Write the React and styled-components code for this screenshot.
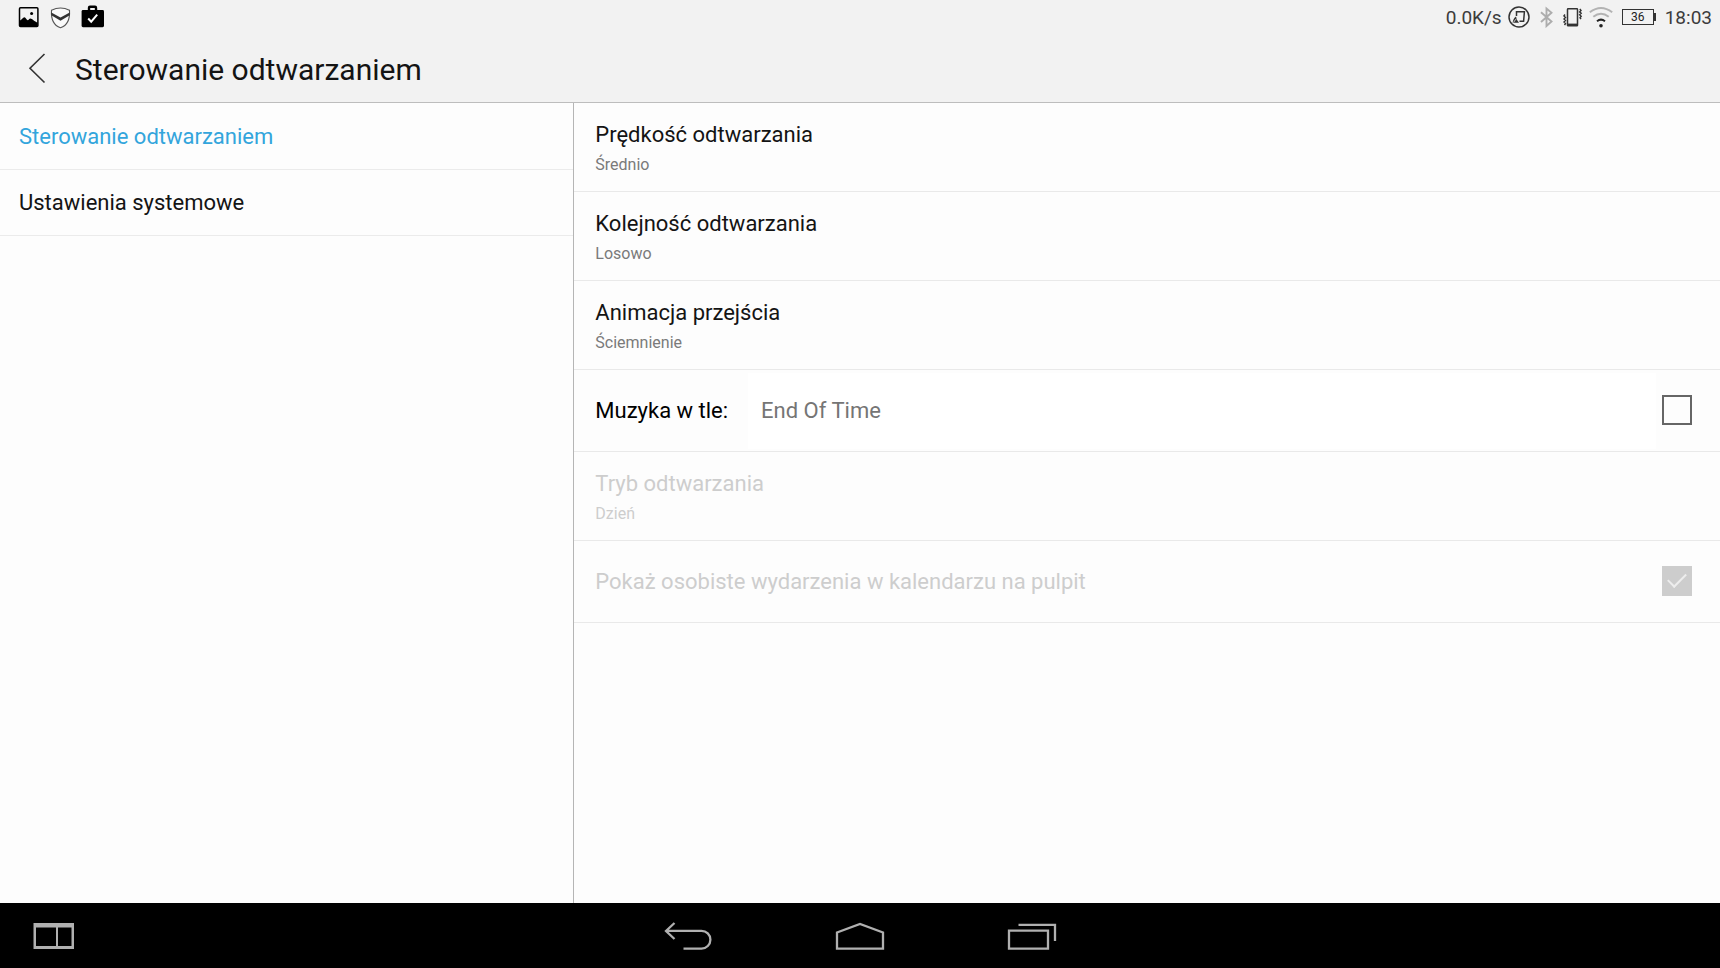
import React from 'react';
import styled, { createGlobalStyle } from 'styled-components';

const GlobalStyle = createGlobalStyle`
  * {
    box-sizing: border-box;
  }
  body {
    margin: 0;
    font-family: Roboto, "Noto Sans", sans-serif;
    background-color: #fdfdfd;
    color: #141414;
  }
  button, input {
    font-family: inherit;
  }
`

const Screen = styled.div`
  display: flex;
  flex-direction: column;
  min-height: 100vh;
`

const Header = styled.header`
  background-color: #f2f2f2;
  border-bottom: 1px solid #bdbdbd;
`

const StatusBar = styled.div`
  display: flex;
  justify-content: space-between;
  align-items: center;
  height: 34px;
  padding: 0 8px 0 17px;
`

const StatusGroup = styled.div`
  display: flex;
  align-items: center;
  gap: ${props => props.$gap}px;
`

const StatusText = styled.span`
  padding-top: 2px;
  font-size: 19px;
  line-height: 24px;
  color: #3c3c3c;
`

const Battery = styled.span`
  display: flex;
  align-items: center;
  margin: 0 3px;
`

const BatteryBody = styled.span`
  width: 32px;
  height: 16px;
  border: 1px solid #333;
  font-size: 12px;
  line-height: 14px;
  text-align: center;
  color: #222;
`

const BatteryTip = styled.span`
  width: 2px;
  height: 8px;
  background-color: #333;
`

const TitleBar = styled.div`
  display: flex;
  align-items: center;
  height: 68px;
  padding-left: 16px;
`

const BackButton = styled.button`
  display: flex;
  justify-content: center;
  padding: 0;
  width: 42px;
  border: none;
  background: none;
`

const Title = styled.h1`
  margin: 0 0 0 17px;
  padding-top: 4px;
  font-size: 30px;
  line-height: 36px;
  font-weight: normal;
`

const Body = styled.div`
  display: grid;
  grid-template-columns: 1fr 2fr;
  flex: 1;
`

const Sidebar = styled.nav`
  padding-top: 1px;
`

const SidebarLink = styled.a`
  display: block;
  padding: 19px 19px 18px;
  border-bottom: 1px solid #ebebeb;
  font-size: 22px;
  line-height: 28px;
  text-decoration: none;
  color: ${props => (props.$active ? '#33a5dc' : '#141414')};
`

const Settings = styled.main`
  border-left: 1px solid #b5b5b5;
`

const Row = styled.div`
  display: flex;
  align-items: center;
  height: 82px;
  padding: 0 28px 0 21px;
  border-bottom: 1px solid #e9e9e9;
`

const RowButton = styled.button`
  display: flex;
  flex-direction: column;
  align-items: flex-start;
  gap: 4px;
  width: 100%;
  padding: 18px 21px 14px;
  border: none;
  border-bottom: 1px solid #e9e9e9;
  background: none;
  text-align: left;
  color: #141414;
  &:disabled {
    color: #cdcdcd;
  }
`

const RowTitle = styled.span`
  font-size: 22px;
  line-height: 28px;
`

const RowValue = styled.span`
  font-size: 16px;
  line-height: 24px;
  color: ${props => (props.$disabled ? '#cdcdcd' : '#7a7a7a')};
`

const RowLabel = styled.label`
  flex: ${props => (props.$wide ? 1 : 'none')};
  font-size: 22px;
  line-height: 28px;
  color: ${props => (props.$disabled ? '#cdcdcd' : '#000')};
`

const MusicField = styled.input`
  flex: 1;
  min-width: 0;
  height: 76px;
  margin: 0 6px 0 20px;
  padding: 0 13px;
  border: none;
  background-color: #fff;
  font-size: 22px;
  color: #757575;
`

const Checkbox = styled.input`
  appearance: none;
  flex: none;
  display: grid;
  place-items: center;
  width: 30px;
  height: 30px;
  margin: 0 0 2px;
  border: 2px solid #666;
  &:checked {
    border: none;
    background-color: #cdcdcd;
  }
  &:checked::after {
    content: '';
    width: 8px;
    height: 16px;
    margin-bottom: 6px;
    border: solid #ededed;
    border-width: 0 2px 2px 0;
    transform: rotate(45deg);
  }
`

const NavBar = styled.footer`
  display: grid;
  grid-template-columns: 1fr auto 1fr;
  align-items: center;
  height: 65px;
  background-color: #000;
`

const NavKeys = styled.div`
  display: flex;
`

const NavButton = styled.button`
  display: flex;
  justify-content: center;
  align-items: center;
  width: ${props => props.$width}px;
  height: 65px;
  padding: 0;
  border: none;
  background: none;
`

const PictureIcon = () => (
  <svg width="22" height="24" viewBox="0 0 22 24">
    <rect x="2.5" y="2.8" width="18.4" height="18.8" rx="1" fill="none" stroke="#000" strokeWidth="1.5" />
    <path d="M3 15.5c1.6-.6 2.8-3.3 4.4-3.3 1.4 0 2.2 3 3.4 3 1 0 1.3-1.7 2.6-1.7 1.8 0 4 3.3 7.4 4v4H3z" />
    <circle cx="14.6" cy="8.4" r="1.5" />
  </svg>
)

const ShieldIcon = () => (
  <svg width="22" height="24" viewBox="0 0 22 24">
    <path d="M2.500 5.200Q11.500 .8 20.500 5.200c.5 8-1.400 15-9 17.500C3.900 20.200 2 13.200 2.500 5.200z" fill="#fafafa" stroke="#555" strokeWidth="1.100" />
    <path d="M2.300 7.400l9.200 5 9.200-5v2.800l-9.200 5.600-9.200-5.600z" fill="#333" />
  </svg>
)

const BriefcaseIcon = () => (
  <svg width="24" height="24" viewBox="0 0 24 24">
    <path d="M8 6V2.800q0-1 1-1h5q1 0 1 1V6" fill="none" stroke="#000" strokeWidth="2.400" />
    <rect x=".6" y="5" width="22.400" height="17.200" rx="1.400" />
    <path d="M7.200 13.500l3 3.200 6-7" fill="none" stroke="#fff" strokeWidth="2" />
  </svg>
)

const CastIcon = () => (
  <svg width="22" height="22" viewBox="0 0 22 22" fill="none" stroke="#333">
    <circle cx="11" cy="11" r="10" strokeWidth="1.500" />
    <path d="M8.500 10V5.800H16.400l-.8 9.400H11.500" strokeWidth="1.500" />
    <path d="M4.600 16.800q.6-4.600 3.400-6.300.6 3.600 3 6.300z" fill="#333" stroke="none" />
    <path d="M5.600 16.500q1-2.600 3-3.600" stroke="#f2f2f2" strokeWidth=".8" />
  </svg>
)

const BluetoothIcon = () => (
  <svg width="21" height="22" viewBox="0 0 21 22" fill="none" stroke="#adadad" strokeWidth="1.900">
    <path d="M5 6.200l10.500 9.300-5 4.500V2.500l5 4.200L5 16" />
  </svg>
)

const VibrateIcon = () => (
  <svg width="20" height="22" viewBox="0 0 20 22" fill="none" stroke="#333">
    <rect x="4.500" y="2.800" width="10" height="17" rx=".6" strokeWidth="1.500" />
    <path d="M4.500 18.800h10" strokeWidth="2.400" />
    <path d="M2 8.500L.9 10l1.600 1.500L.9 13l1.600 1.500L.9 16l1.600 1.500-1 1.500M16.800 3l1.200 1.400-1.400 1.500 1.600 1.400-1.600 1.500 1.600 1.500-1.200 1.400 1 1.500" strokeWidth="1.400" />
  </svg>
)

const WifiIcon = () => (
  <svg width="24" height="22" viewBox="0 0 24 22" fill="none" strokeWidth="2">
    <path d="M.8 6.300q11.200-8.600 22.400 0" stroke="#b3b3b3" />
    <path d="M4.300 10.800q7.700-6 15.400 0" stroke="#b3b3b3" />
    <path d="M8 15.200q4-3.200 8 0" stroke="#222" />
    <circle cx="12" cy="19.700" r="1.800" fill="#222" />
  </svg>
)

const ChevronIcon = () => (
  <svg width="18" height="32" viewBox="0 0 18 32" fill="none" stroke="#333" strokeWidth="1.600">
    <path d="M16.500 2L2 16.300l14.500 14.200" />
  </svg>
)

const SplitIcon = () => (
  <svg width="42" height="27" viewBox="0 0 42 27" fill="#b0b0b0">
    <path d="M.5 1h40.500v26H.5zM3 5.500v18.500h20V5.500zm22 0v18.500h13.500V5.500z" fillRule="evenodd" />
  </svg>
)

const ReturnIcon = () => (
  <svg width="50" height="30" viewBox="0 0 50 30" fill="none" stroke="#b0b0b0" strokeWidth="2.300">
    <path d="M11.500 2L3 10l8.500 8M3 9.800h35.500a8.900 8.900 0 0 1 0 17.800H20.500" />
  </svg>
)

const HomeIcon = () => (
  <svg width="50" height="30" viewBox="0 0 50 30" fill="none" stroke="#b0b0b0" strokeWidth="2.300">
    <path d="M2 27.600V11.500L25 3l23 8.500v16.100z" />
  </svg>
)

const RecentsIcon = () => (
  <svg width="50" height="30" viewBox="0 0 50 30" fill="none" stroke="#b0b0b0" strokeWidth="2.300">
    <path d="M2 9.600h39v18H2zM11.500 3.800H48v16.200" />
  </svg>
)

const Setting = props => (
  <RowButton type="button" disabled={props.disabled}>
    <RowTitle>{props.title}</RowTitle>
    <RowValue $disabled={props.disabled}>{props.value}</RowValue>
  </RowButton>
)

const App = () => {
  return (
    <Screen>
      <GlobalStyle />
      <Header>
        <StatusBar>
          <StatusGroup $gap={10}>
            <PictureIcon />
            <ShieldIcon />
            <BriefcaseIcon />
          </StatusGroup>
          <StatusGroup $gap={6}>
            <StatusText>0.0K/s</StatusText>
            <CastIcon />
            <BluetoothIcon />
            <VibrateIcon />
            <WifiIcon />
            <Battery>
              <BatteryBody>36</BatteryBody>
              <BatteryTip />
            </Battery>
            <StatusText>18:03</StatusText>
          </StatusGroup>
        </StatusBar>
        <TitleBar>
          <BackButton type="button" aria-label="Wstecz">
            <ChevronIcon />
          </BackButton>
          <Title>Sterowanie odtwarzaniem</Title>
        </TitleBar>
      </Header>
      <Body>
        <Sidebar>
          <SidebarLink href="#playback" $active>Sterowanie odtwarzaniem</SidebarLink>
          <SidebarLink href="#system">Ustawienia systemowe</SidebarLink>
        </Sidebar>
        <Settings>
          <Setting title="Prędkość odtwarzania" value="Średnio" />
          <Setting title="Kolejność odtwarzania" value="Losowo" />
          <Setting title="Animacja przejścia" value="Ściemnienie" />
          <Row>
            <RowLabel htmlFor="music">Muzyka w tle:</RowLabel>
            <MusicField id="music" type="text" defaultValue="End Of Time" readOnly />
            <Checkbox type="checkbox" aria-label="Muzyka w tle" />
          </Row>
          <Setting title="Tryb odtwarzania" value="Dzień" disabled />
          <Row>
            <RowLabel htmlFor="events" $wide $disabled>
              Pokaż osobiste wydarzenia w kalendarzu na pulpit
            </RowLabel>
            <Checkbox id="events" type="checkbox" defaultChecked disabled />
          </Row>
        </Settings>
      </Body>
      <NavBar>
        <NavButton type="button" $width={108} aria-label="Podziel ekran">
          <SplitIcon />
        </NavButton>
        <NavKeys>
          <NavButton type="button" $width={172} aria-label="Cofnij">
            <ReturnIcon />
          </NavButton>
          <NavButton type="button" $width={172} aria-label="Ekran główny">
            <HomeIcon />
          </NavButton>
          <NavButton type="button" $width={172} aria-label="Ostatnie aplikacje">
            <RecentsIcon />
          </NavButton>
        </NavKeys>
      </NavBar>
    </Screen>
  );
};

export default App;
